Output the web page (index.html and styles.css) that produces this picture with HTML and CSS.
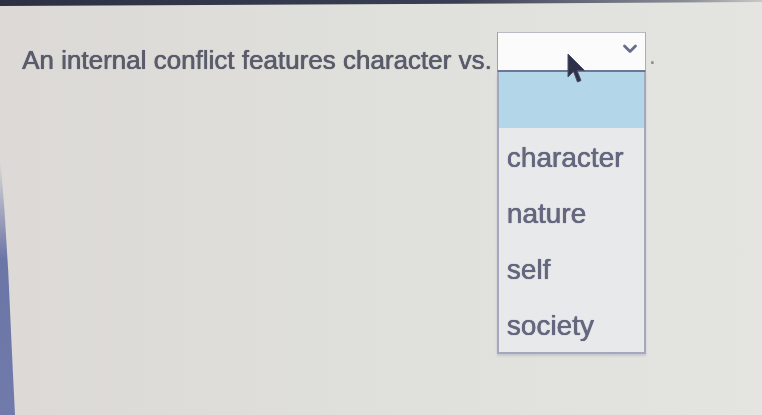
FILE: index.html
```html
<!DOCTYPE html>
<html lang="en">
<head>
<meta charset="utf-8">
<title>Question</title>
<link rel="stylesheet" href="styles.css">
</head>
<body>
<div class="screen">
  <div class="topbar"></div>
  <div class="main">
    <div class="edge"></div>
    <div class="content">
      <div class="question">
        <span class="prompt">An internal conflict features character vs.</span>
        <div class="picker">
          <div class="select">
            <svg class="chevron" width="16" height="12" viewBox="0 0 16 12"><path d="M2.5 3 L8 8.5 L13.5 3" fill="none" stroke="#676c8a" stroke-width="2.8" stroke-linecap="round" stroke-linejoin="round"/></svg>
          </div>
          <ul class="menu">
            <li class="option active"></li>
            <li class="option">character</li>
            <li class="option">nature</li>
            <li class="option">self</li>
            <li class="option">society</li>
          </ul>
          <svg class="cursor" width="22" height="32" viewBox="0 0 22 32"><path d="M2 1 L2 24 L7.5 18.5 L11.5 29 L15 27.5 L11 17.5 L18.5 17.5 Z" fill="#2d3048" stroke="#4a4e66" stroke-width="1"/></svg>
        </div>
        <span class="period">.</span>
      </div>
    </div>
  </div>
</div>
</body>
</html>
```

FILE: styles.css
```css
html, body {
  margin: 0;
  height: 100%;
}

body {
  background: #dedfdb;
  font-family: "Liberation Sans", Arial, sans-serif;
  overflow: hidden;
}

.screen {
  display: flex;
  flex-direction: column;
  height: 415px;
  background: linear-gradient(90deg, #dcd9d6 0%, #dfdfdb 45%, #e2e3df 80%, #e4e5e1 100%);
}

.topbar {
  height: 6px;
  background: linear-gradient(90deg, #2c3044 0%, #3a3e52 60%, #8a8c96 90%, #c8c9c6 100%);
  clip-path: polygon(0 0, 100% 0, 100% 35%, 0 100%);
  flex: none;
}

.main {
  flex: 1;
  display: flex;
  position: relative;
}

.edge {
  width: 15px;
  flex: none;
  background: linear-gradient(180deg, rgba(100,110,160,0) 0%, rgba(100,110,160,0) 38%, #6b75a6 62%, #707bac 100%);
  clip-path: polygon(0 36%, 30% 50%, 55% 65%, 80% 85%, 100% 100%, 0 100%);
}

.content {
  flex: 1;
  padding: 26px 0 0 7px;
}

.question {
  display: flex;
  align-items: flex-start;
  color: #5b5c6b;
  filter: blur(0.6px);
}

.prompt {
  font-size: 26px;
  line-height: 30px;
  margin-top: 13px;
  text-shadow: 0 0 1px #5b5c6b, 0.4px 0 0 #5b5c6b;
}

.picker {
  position: relative;
  width: 149px;
  margin-left: 5px;
}

.select {
  background: #fbfbfb;
  border: 1px solid #9aa0b8;
  border-top-color: #b9bbc4;
  border-right-color: #a8acbd;
  border-bottom: 2px solid #6f7596;
  box-sizing: border-box;
  height: 40px;
  display: flex;
  justify-content: flex-end;
  align-items: center;
  padding-right: 7px;
}

.chevron {
  margin-top: -6px;
}

.menu {
  position: absolute;
  top: 40px;
  left: 0;
  width: 149px;
  margin: 0;
  padding: 0;
  list-style: none;
  background: #e7e9ea;
  border: 2px solid #a3a8c0;
  border-top: none;
  box-sizing: border-box;
  box-shadow: 0 2px 2px rgba(120, 120, 140, 0.25);
}

.option {
  height: 56px;
  padding-left: 8px;
  font-size: 28px;
  line-height: 60px;
  color: #65677f;
  text-shadow: 0 0 1px #65677f, 0.4px 0 0 #65677f;
}

.option.active {
  background: #b3d7e8;
}

.cursor {
  position: absolute;
  left: 69px;
  top: 21px;
}

.period {
  font-size: 26px;
  line-height: 30px;
  margin-top: 8px;
  margin-left: 3px;
  color: #8a8c98;
}
```
